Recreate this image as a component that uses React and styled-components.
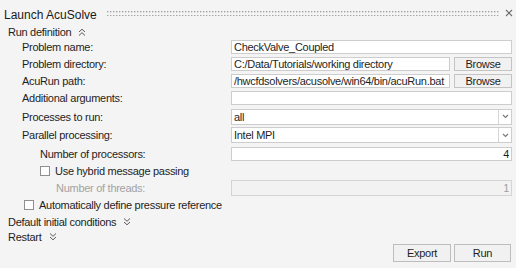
import React from "react";
import styled, { createGlobalStyle } from "styled-components";

const GlobalStyle = createGlobalStyle`
  html, body {
    margin: 0;
    padding: 0;
    background: #f4f4f4;
  }
  * {
    box-sizing: border-box;
  }
`;

const DoubleChevron = ({ up }) => (
  <ChevronIcon width="8" height="8" viewBox="0 0 8 8">
    {up ? (
      <>
        <polyline points="1,4 4,1.2 7,4" />
        <polyline points="1,7.5 4,4.7 7,7.5" />
      </>
    ) : (
      <>
        <polyline points="1,0.5 4,3.3 7,0.5" />
        <polyline points="1,4 4,6.8 7,4" />
      </>
    )}
  </ChevronIcon>
);

const Section = ({ title, open, h, indent = 8 }) => (
  <SectionHeader $h={h} $indent={indent}>
    <span>{title}</span>
    <DoubleChevron up={open} />
  </SectionHeader>
);

const Dropdown = ({ value }) => (
  <SelectBox>
    <SelectValue>{value}</SelectValue>
    <SelectArrow>
      <svg width="7" height="5" viewBox="0 0 7 5">
        <polyline points="1,1 3.5,3.5 6,1" fill="none" stroke="#7a7a7a" strokeWidth="1.2" />
      </svg>
    </SelectArrow>
  </SelectBox>
);

const App = () => {
  return (
    <>
      <GlobalStyle />
      <Panel>
        <TitleBar>
          <Title>Launch AcuSolve</Title>
          <Grip>
            <svg width="100%" height="5">
              <defs>
                <pattern id="grip" width="3" height="4" patternUnits="userSpaceOnUse">
                  <rect width="1.4" height="1.4" fill="#a3a3a3" />
                </pattern>
              </defs>
              <rect width="100%" height="100%" fill="url(#grip)" />
            </svg>
          </Grip>
          <CloseIcon width="8" height="8" viewBox="0 0 8 8">
            <line x1="1" y1="1" x2="7" y2="7" />
            <line x1="7" y1="1" x2="1" y2="7" />
          </CloseIcon>
        </TitleBar>

        <Section title="Run definition" open h={12} />

        <Row $h={17}>
          <Label $indent={22}>Problem name:</Label>
          <TextInput readOnly value="CheckValve_Coupled" />
        </Row>
        <Row $h={17}>
          <Label $indent={22}>Problem directory:</Label>
          <TextInput readOnly value="C:/Data/Tutorials/working directory" />
          <BrowseButton>Browse</BrowseButton>
        </Row>
        <Row $h={17}>
          <Label $indent={22}>AcuRun path:</Label>
          <TextInput readOnly value="/hwcfdsolvers/acusolve/win64/bin/acuRun.bat" />
          <BrowseButton>Browse</BrowseButton>
        </Row>
        <Row $h={18}>
          <Label $indent={22}>Additional arguments:</Label>
          <TextInput readOnly value="" />
        </Row>
        <Row $h={19}>
          <Label $indent={22}>Processes to run:</Label>
          <Dropdown value="all" />
        </Row>
        <Row $h={18}>
          <Label $indent={22}>Parallel processing:</Label>
          <Dropdown value="Intel MPI" />
        </Row>
        <Row $h={19}>
          <Label $indent={40}>Number of processors:</Label>
          <TextInput readOnly value="4" $align="right" />
        </Row>
        <Row $h={16}>
          <CheckLabel $indent={40}>
            <Checkbox />
            Use hybrid message passing
          </CheckLabel>
        </Row>
        <Row $h={18}>
          <Label $indent={56} $disabled>
            Number of threads:
          </Label>
          <TextInput readOnly disabled value="1" $align="right" $h={16} />
        </Row>
        <Row $h={16}>
          <CheckLabel $indent={24}>
            <Checkbox />
            Automatically define pressure reference
          </CheckLabel>
        </Row>

        <Section title="Default initial conditions" h={17} />
        <Section title="Restart" h={14} />

        <Footer>
          <ActionButton $w={58}>Export</ActionButton>
          <ActionButton $w={57}>Run</ActionButton>
        </Footer>
      </Panel>
    </>
  );
};

const Panel = styled.div`
  width: 516px;
  height: 268px;
  display: flex;
  flex-direction: column;
  padding-right: 4px;
  background: #f4f4f4;
  color: #1e1e1e;
  font-family: "Liberation Sans", Arial, sans-serif;
  font-size: 11px;
  letter-spacing: -0.28px;
  overflow: hidden;
`;

const TitleBar = styled.div`
  display: flex;
  align-items: center;
  height: 26px;
  padding: 4px 0 0 4px;
`;

const Title = styled.div`
  font-size: 12px;
  letter-spacing: 0;
  color: #1a1a1a;
  white-space: nowrap;
  margin-top: -1px;
`;

const Grip = styled.div`
  flex: 1;
  height: 5px;
  margin: -4px 5px 0 10px;
  display: flex;

  svg {
    display: block;
  }
`;

const CloseIcon = styled.svg`
  margin-top: -4px;
  margin-right: -1px;
  fill: none;
  stroke: #6e6e6e;
  stroke-width: 1.1;
`;

const ChevronIcon = styled.svg`
  margin-left: 7px;
  fill: none;
  stroke: #5a5a5a;
  stroke-width: 1;
`;

const SectionHeader = styled.div`
  display: flex;
  align-items: center;
  height: ${(p) => p.$h}px;
  padding-left: ${(p) => p.$indent}px;
  white-space: nowrap;
`;

const Row = styled.div`
  display: flex;
  align-items: center;
  height: ${(p) => p.$h}px;
`;

const Label = styled.div`
  flex: 0 0 231px;
  padding-left: ${(p) => p.$indent}px;
  white-space: nowrap;
  color: ${(p) => (p.$disabled ? "#a2a2a2" : "#1e1e1e")};
`;

const CheckLabel = styled.label`
  display: flex;
  align-items: center;
  gap: 5px;
  padding-left: ${(p) => p.$indent}px;
  white-space: nowrap;
`;

const Checkbox = styled.span`
  width: 10px;
  height: 10px;
  border: 1px solid #8f8f8f;
  background: #fff;
`;

const TextInput = styled.input`
  flex: 1;
  min-width: 0;
  height: ${(p) => p.$h || 14}px;
  margin: 0;
  padding: 0 2px;
  border: 1px solid #cdcdcd;
  background: #fff;
  font-family: inherit;
  font-size: 11px;
  letter-spacing: -0.28px;
  color: #1e1e1e;
  text-align: ${(p) => p.$align || "left"};
  outline: none;

  &:disabled {
    background: #f2f2f2;
    border-color: #d4d4d4;
    color: #a0a0a0;
  }
`;

const BrowseButton = styled.button`
  flex: 0 0 58px;
  height: 14px;
  margin-left: 4px;
  padding: 0;
  border: 1px solid #c4c4c4;
  background: #f1f1f1;
  font-family: inherit;
  font-size: 11px;
  letter-spacing: -0.28px;
  color: #1e1e1e;
  line-height: 12px;
`;

const SelectBox = styled.div`
  flex: 1;
  display: flex;
  height: 16px;
  border: 1px solid #cdcdcd;
  background: #fff;
`;

const SelectValue = styled.div`
  flex: 1;
  padding-left: 2px;
  line-height: 14px;
  white-space: nowrap;
`;

const SelectArrow = styled.div`
  flex: 0 0 13px;
  display: flex;
  align-items: center;
  justify-content: center;
  border-left: 1px solid #d6d6d6;
`;

const Footer = styled.div`
  display: flex;
  justify-content: flex-end;
  gap: 3px;
  margin-right: 1px;
`;

const ActionButton = styled.button`
  width: ${(p) => p.$w}px;
  height: 18px;
  padding: 0;
  border: 1px solid #bdbdbd;
  background: #f1f1f1;
  font-family: inherit;
  font-size: 11px;
  letter-spacing: -0.28px;
  color: #1e1e1e;
`;

export default App;
